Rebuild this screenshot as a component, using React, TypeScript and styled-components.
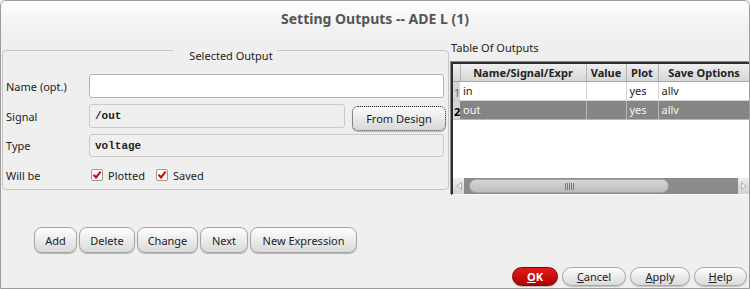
import React from "react";
import styled, { createGlobalStyle } from "styled-components";

const GlobalStyle = createGlobalStyle`
  html, body {
    margin: 0;
    padding: 0;
    background: #efefef;
  }
  body {
    font-family: "Noto Sans", "Open Sans", sans-serif;
    font-size: 11px;
    color: #222;
  }
  * {
    box-sizing: border-box;
  }
`;

const Window = styled.div`
  width: 750px;
  height: 289px;
  border: 1px solid #9c9c9c;
  border-radius: 6px 6px 0 0;
  background: #efefef;
  display: flex;
  flex-direction: column;
  overflow: hidden;
`;

const TitleBar = styled.div`
  height: 35px;
  flex: none;
  display: flex;
  align-items: center;
  justify-content: center;
  background: linear-gradient(#fdfdfd, #efefef);
  font-size: 14px;
  font-weight: bold;
  color: #555;
`;

const Main = styled.div`
  display: flex;
  align-items: flex-start;
  padding-left: 1px;
`;

const GroupBox = styled.fieldset`
  margin: 0;
  width: 447px;
  min-width: 0;
  padding: 0 4px 0 3px;
  border: 1px solid #c6c6c6;
  border-radius: 4px;
`;

const GroupTitle = styled.legend`
  margin: 0 auto;
  padding: 12px 4px 0 16px;
  line-height: 16px;
  font-size: 11px;
  color: #222;
`;

const FormRow = styled.div<{ $top: number; $h: number }>`
  display: flex;
  align-items: center;
  margin-top: ${(p) => p.$top}px;
  height: ${(p) => p.$h}px;
`;

const FieldLabel = styled.span`
  width: 83px;
  flex: none;
`;

const TextField = styled.div<{ $readOnly?: boolean; $width?: number }>`
  height: 100%;
  ${(p) => (p.$width ? `width: ${p.$width}px; flex: none;` : "flex: 1;")}
  display: flex;
  align-items: center;
  padding-left: 5px;
  border: 1px solid ${(p) => (p.$readOnly ? "#cacaca" : "#b4b4b4")};
  border-radius: 3px;
  background: ${(p) => (p.$readOnly ? "#efefef" : "#ffffff")};
  font-family: "Liberation Mono", "DejaVu Sans Mono", monospace;
  font-weight: bold;
  font-size: 11px;
  color: #222;
`;

const DesignButton = styled.button`
  align-self: flex-start;
  margin: 2px -2px 0 7px;
  width: 94px;
  height: 25px;
  flex: none;
  border: 1px dotted #222;
  border-radius: 6px;
  background: linear-gradient(#fbfbfb, #d8d8d8);
  box-shadow: 0 1px 1px rgba(0, 0, 0, 0.25);
  font-family: "Noto Sans", "Open Sans", sans-serif;
  font-size: 11px;
  color: #222;
  padding: 0;
`;

const CheckGroup = styled.label`
  display: inline-flex;
  align-items: center;
  gap: 5px;
  margin-left: 2px;
  margin-right: 9px;
`;

const Check = () => (
  <svg width="12" height="12" viewBox="0 0 12 12">
    <rect x="0.5" y="0.5" width="11" height="11" rx="1.5" fill="#fdfdfd" stroke="#9a9a9a" />
    <path d="M2.6 5.6 L5 8.4 L9.6 2.6" fill="none" stroke="#cc1010" strokeWidth="2.2" />
  </svg>
);

const TablePanel = styled.div`
  flex: 1;
  margin-left: 2px;
  min-width: 0;
`;

const PanelLabel = styled.div`
  margin-top: 4px;
  line-height: 16px;
`;

const TableFrame = styled.div`
  margin-top: 6px;
  height: 133px;
  border-top: 2px solid #2e2e2e;
  border-left: 2px solid #2e2e2e;
  border-bottom: 1px solid #fafafa;
  box-shadow: -1px -1px 0 #8a8a8a;
  background: #fff;
  display: flex;
  flex-direction: column;
  overflow: hidden;
`;

const Grid = styled.table`
  width: 297px;
  table-layout: fixed;
  border-collapse: collapse;
  font-size: 11px;
`;

const HeadCell = styled.th`
  height: 17px;
  padding: 0;
  background: linear-gradient(#eeeeee, #d6d6d6);
  border-right: 1px solid #b4b4b4;
  border-bottom: 1px solid #a8a8a8;
  font-weight: bold;
  text-align: center;
  color: #222;
  white-space: nowrap;
  overflow: hidden;
`;

const RowHead = styled.td<{ $selected?: boolean }>`
  padding: 0 0 0 1px;
  background: #d6d6d6;
  border-bottom: 1px solid #c4c4c4;
  font-weight: ${(p) => (p.$selected ? "bold" : "normal")};
  color: ${(p) => (p.$selected ? "#000" : "#666")};
  vertical-align: bottom;
  line-height: 15px;
`;

const Cell = styled.td<{ $selected?: boolean }>`
  height: 19px;
  padding: 0 0 0 3px;
  background: ${(p) => (p.$selected ? "#858585" : "#ffffff")};
  color: ${(p) => (p.$selected ? "#f4f4f4" : "#222")};
  border-right: 1px solid ${(p) => (p.$selected ? "#b8b8b8" : "#d4d4d4")};
  border-bottom: 1px solid ${(p) => (p.$selected ? "#b8b8b8" : "#d4d4d4")};
  white-space: nowrap;
  overflow: hidden;
`;

const ScrollBar = styled.div`
  margin-top: auto;
  height: 16px;
  flex: none;
  display: flex;
  align-items: center;
  background: #8b8b8b;
`;

const ScrollArrow = styled.div`
  width: 11px;
  height: 16px;
  flex: none;
  display: flex;
  align-items: center;
  justify-content: center;
  background: linear-gradient(#ededed, #d2d2d2);
`;

const ScrollThumb = styled.div`
  margin-left: 5px;
  width: 200px;
  height: 14px;
  flex: none;
  display: flex;
  align-items: center;
  justify-content: center;
  border: 1px solid #a2a2a2;
  border-radius: 7px;
  background: linear-gradient(#d6d6d6, #bdbdbd);
`;

const Grip = styled.div`
  width: 9px;
  height: 7px;
  background: repeating-linear-gradient(90deg, #777 0 1px, transparent 1px 2px);
`;

const ScrollFill = styled.div`
  flex: 1;
`;

const ActionRow = styled.div`
  display: flex;
  gap: 2px;
  margin-top: 32px;
  padding-left: 33px;
`;

const ActionButton = styled.button<{ $width: number }>`
  width: ${(p) => p.$width}px;
  height: 26px;
  padding: 0;
  border: 1px solid #a6a6a6;
  border-radius: 8px;
  background: linear-gradient(#fefefe, #d9d9d9);
  box-shadow: 0 1px 1px rgba(0, 0, 0, 0.25);
  font-family: "Noto Sans", "Open Sans", sans-serif;
  font-size: 11px;
  color: #222;
  white-space: nowrap;
  overflow: hidden;
`;

const Footer = styled.div`
  margin-top: auto;
  display: flex;
  justify-content: flex-end;
  gap: 4px;
  padding: 0 2px 2px 0;
`;

const DialogButton = styled.button<{ $width: number; $primary?: boolean }>`
  width: ${(p) => p.$width}px;
  height: 19px;
  padding: 0;
  border: 1px solid ${(p) => (p.$primary ? "#8a0000" : "#a8a8a8")};
  border-radius: 10px;
  background: ${(p) =>
    p.$primary
      ? "linear-gradient(#e41c1c, #b00000)"
      : "linear-gradient(#fdfdfd, #dadada)"};
  box-shadow: 0 1px 1px rgba(0, 0, 0, 0.2);
  font-family: "Noto Sans", "Open Sans", sans-serif;
  font-size: 11px;
  font-weight: ${(p) => (p.$primary ? "bold" : "normal")};
  color: ${(p) => (p.$primary ? "#ffffff" : "#222")};
`;

const rows = [
  { n: "1", name: "in", value: "", plot: "yes", save: "allv", selected: false },
  { n: "2", name: "out", value: "", plot: "yes", save: "allv", selected: true },
];

export default function App() {
  return (
    <>
      <GlobalStyle />
      <Window>
        <TitleBar>Setting Outputs -- ADE L (1)</TitleBar>
        <Main>
          <GroupBox>
            <GroupTitle>Selected Output</GroupTitle>
            <FormRow $top={10} $h={24}>
              <FieldLabel>Name (opt.)</FieldLabel>
              <TextField />
            </FormRow>
            <FormRow $top={6} $h={24}>
              <FieldLabel>Signal</FieldLabel>
              <TextField $readOnly $width={256}>/out</TextField>
              <DesignButton>From Design</DesignButton>
            </FormRow>
            <FormRow $top={6} $h={23}>
              <FieldLabel>Type</FieldLabel>
              <TextField $readOnly>voltage</TextField>
            </FormRow>
            <FormRow $top={4} $h={28}>
              <FieldLabel>Will be</FieldLabel>
              <CheckGroup>
                <Check />
                Plotted
              </CheckGroup>
              <CheckGroup>
                <Check />
                Saved
              </CheckGroup>
            </FormRow>
          </GroupBox>
          <TablePanel>
            <PanelLabel>Table Of Outputs</PanelLabel>
            <TableFrame>
              <Grid>
                <colgroup>
                  <col style={{ width: 7 }} />
                  <col style={{ width: 126 }} />
                  <col style={{ width: 40 }} />
                  <col style={{ width: 32 }} />
                  <col style={{ width: 92 }} />
                </colgroup>
                <thead>
                  <tr>
                    <HeadCell />
                    <HeadCell>Name/Signal/Expr</HeadCell>
                    <HeadCell>Value</HeadCell>
                    <HeadCell>Plot</HeadCell>
                    <HeadCell>Save Options</HeadCell>
                  </tr>
                </thead>
                <tbody>
                  {rows.map((r) => (
                    <tr key={r.n}>
                      <RowHead $selected={r.selected}>{r.n}</RowHead>
                      <Cell $selected={r.selected}>{r.name}</Cell>
                      <Cell $selected={r.selected}>{r.value}</Cell>
                      <Cell $selected={r.selected}>{r.plot}</Cell>
                      <Cell $selected={r.selected}>{r.save}</Cell>
                    </tr>
                  ))}
                </tbody>
              </Grid>
              <ScrollBar>
                <ScrollArrow>
                  <svg width="6" height="8" viewBox="0 0 6 8">
                    <path d="M5.5 0.5 L0.8 4 L5.5 7.5 Z" fill="#f4f4f4" stroke="#b0b0b0" />
                  </svg>
                </ScrollArrow>
                <ScrollThumb>
                  <Grip />
                </ScrollThumb>
                <ScrollFill />
                <ScrollArrow>
                  <svg width="6" height="8" viewBox="0 0 6 8">
                    <path d="M0.5 0.5 L5.2 4 L0.5 7.5 Z" fill="#f4f4f4" stroke="#b0b0b0" />
                  </svg>
                </ScrollArrow>
              </ScrollBar>
            </TableFrame>
          </TablePanel>
        </Main>
        <ActionRow>
          <ActionButton $width={43}>Add</ActionButton>
          <ActionButton $width={56}>Delete</ActionButton>
          <ActionButton $width={61}>Change</ActionButton>
          <ActionButton $width={48}>Next</ActionButton>
          <ActionButton $width={107}>New Expression</ActionButton>
        </ActionRow>
        <Footer>
          <DialogButton $width={46} $primary>
            <u>O</u>K
          </DialogButton>
          <DialogButton $width={64}>
            <u>C</u>ancel
          </DialogButton>
          <DialogButton $width={60}>
            <u>A</u>pply
          </DialogButton>
          <DialogButton $width={53}>
            <u>H</u>elp
          </DialogButton>
        </Footer>
      </Window>
    </>
  );
}
